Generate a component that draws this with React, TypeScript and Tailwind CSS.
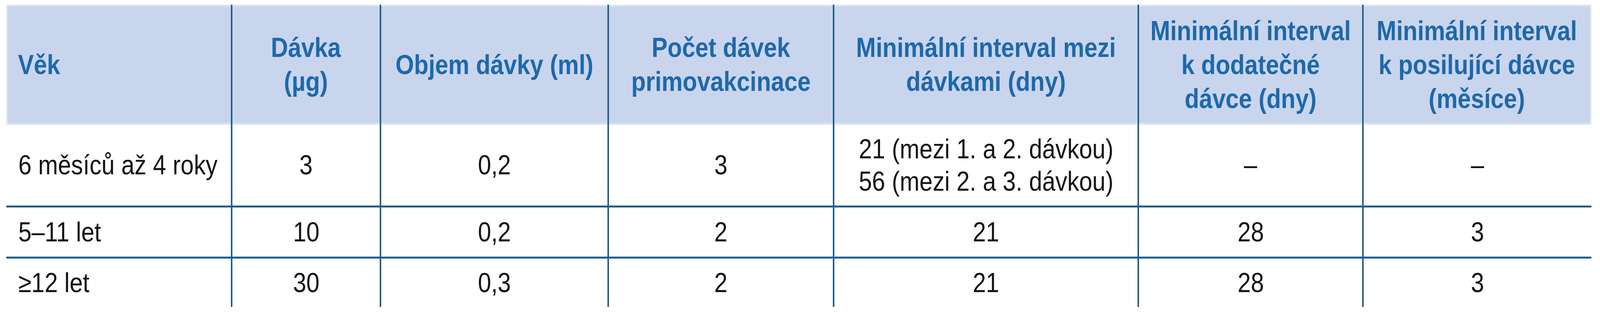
import React from "react";

// Tabulka dávkování: 3 věkové skupiny × 7 sloupců.

type Row = { age: string; cells: React.ReactNode[]; tall?: boolean };

const COLS = [
  "w-[575px]",
  "w-[381px]",
  "w-[583px]",
  "w-[577px]",
  "w-[780px]",
  "w-[575px]",
  "w-[587px]",
];

const HEAD: React.ReactNode[] = [
  "Věk",
  <>Dávka<br />(µg)</>,
  "Objem dávky (ml)",
  <>Počet dávek<br />primovakcinace</>,
  <>Minimální interval mezi<br />dávkami (dny)</>,
  <>Minimální interval<br />k dodatečné<br />dávce (dny)</>,
  <>Minimální interval<br />k posilující dávce<br />(měsíce)</>,
];

const ROWS: Row[] = [
  {
    age: "6 měsíců až 4 roky",
    cells: ["3", "0,2", "3", <>21 (mezi 1. a 2. dávkou)<br />56 (mezi 2. a 3. dávkou)</>, "–", "–"],
    tall: true,
  },
  { age: "5–11 let", cells: ["10", "0,2", "2", "21", "28", "3"] },
  { age: "≥12 let", cells: ["30", "0,3", "2", "21", "28", "3"] },
];

export default function App() {
  return (
    <div className="w-full h-[800px] bg-white font-['Liberation_Sans',Arial,sans-serif]">
      <div className="pl-[16px] pt-[12px]">
        {/* hlavička */}
        <div className="flex">
          {HEAD.map((h, i) => (
            <div key={i} className={`${COLS[i]} shrink-0 ${i > 0 ? "border-l-4 border-[#1f5f8a]" : ""}`}>
              <div
                className={`h-[308px] bg-[#c8d5ed] border-y-[5px] border-[#dde4f1] flex items-center text-[70px] leading-[87px] font-bold text-[#1f68ab] ${
                  i === 0 ? "border-l-4 pl-[26px]" : "justify-center text-center"
                } ${i === 6 ? "border-r-4" : ""}`}
              >
                <div className={`whitespace-nowrap scale-x-[0.868] ${i === 0 ? "origin-left" : "origin-center"}`}>{h}</div>
              </div>
            </div>
          ))}
        </div>

        {/* řádky */}
        {ROWS.map((r, ri) => (
          <div key={ri} className="flex">
            {[r.age, ...r.cells].map((c, i) => (
              <div
                key={i}
                className={`${COLS[i]} shrink-0 ${r.tall ? "h-[212px]" : ri === 1 ? "h-[131px]" : "h-[124px]"} ${
                  ri < ROWS.length - 1 ? "border-b-[5px] border-b-[#1f5f8a]" : ""
                } ${i > 0 ? "border-l-4 border-l-[#1f5f8a] justify-center text-center" : "pl-[31px]"} flex items-center text-[70px] leading-[83px] text-[#141414]`}
              >
                <div className={`whitespace-nowrap scale-x-[0.868] ${i === 0 ? "origin-left" : "origin-center"}`}>{c}</div>
              </div>
            ))}
          </div>
        ))}
      </div>
    </div>
  );
}
